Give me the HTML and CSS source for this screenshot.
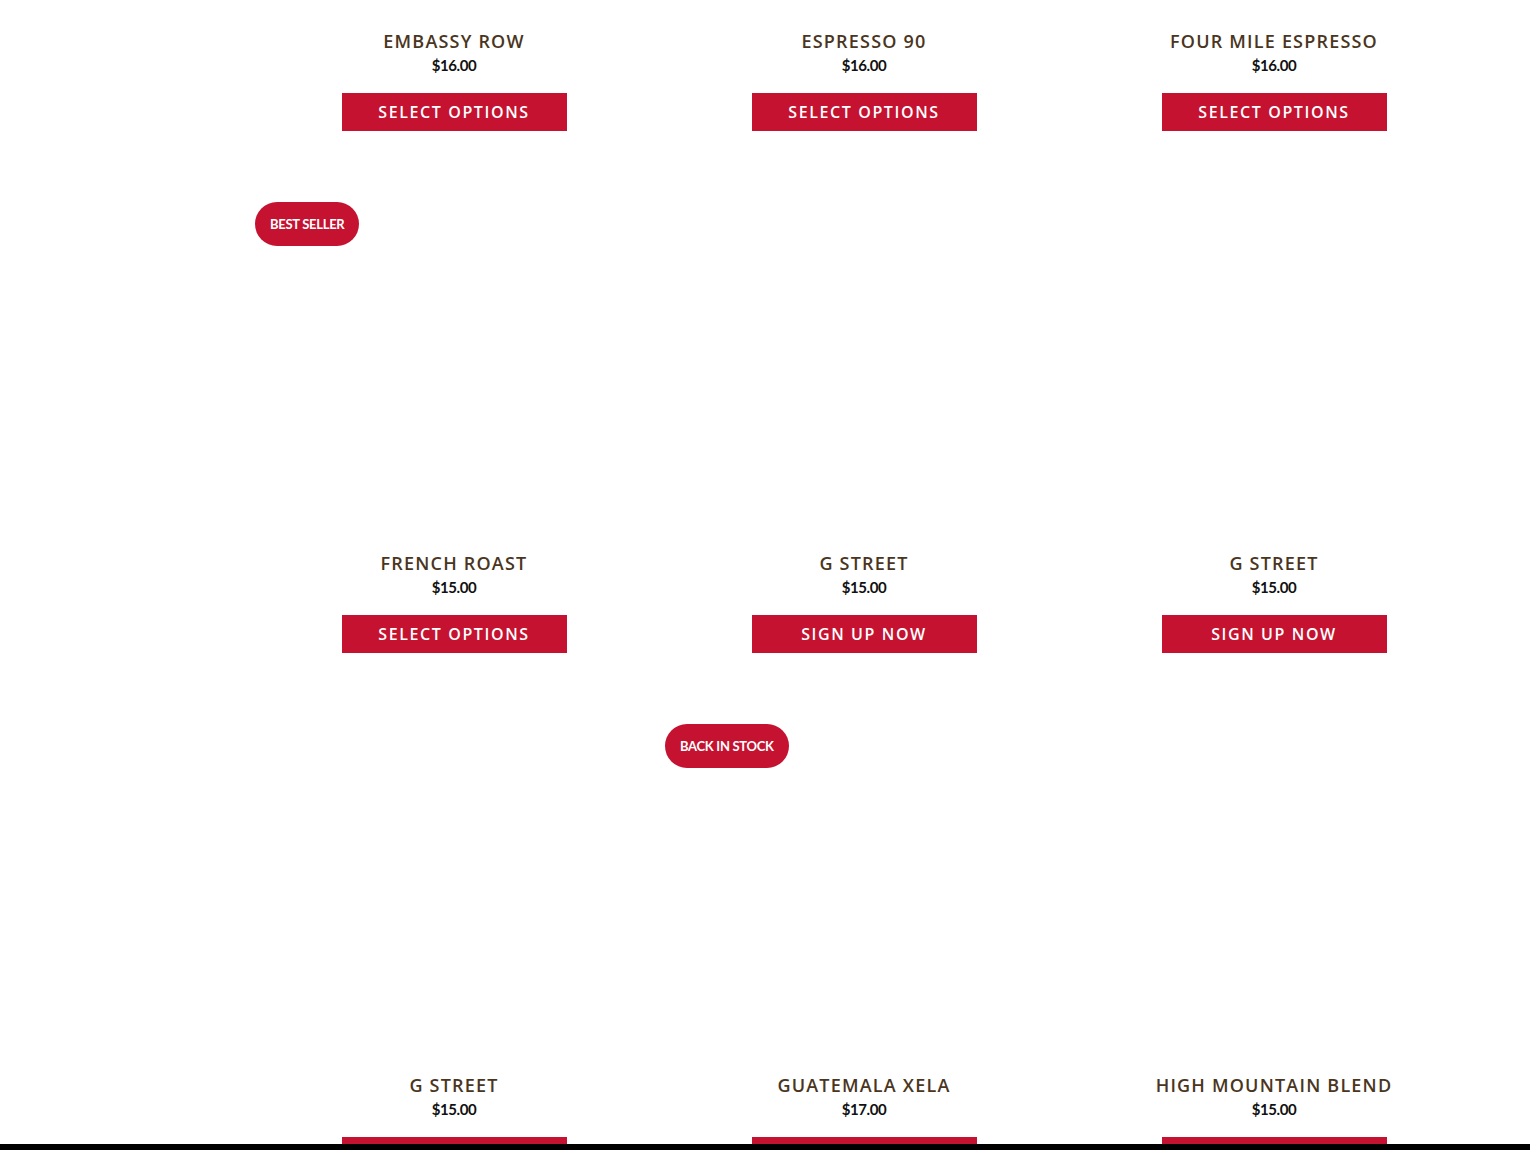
FILE: index.html
```html
<!doctype html>
<html>
<head>
    <meta charset="utf-8">
    <meta name="viewport" content="width=device-width, initial-scale=1">
    <title>Shop Coffee</title>

    <link rel="stylesheet" href="styles.css">
</head>
<body>

<div class="shop">
    <ul class="products">
        <li class="product">
            <div class="thumb"></div>
            <h2 class="productTitle">Embassy Row</h2>
            <span class="price">$16.00</span>
            <a class="button" href="#">Select options</a>
        </li>
        <li class="product">
            <div class="thumb"></div>
            <h2 class="productTitle">Espresso 90</h2>
            <span class="price">$16.00</span>
            <a class="button" href="#">Select options</a>
        </li>
        <li class="product">
            <div class="thumb"></div>
            <h2 class="productTitle">Four Mile Espresso</h2>
            <span class="price">$16.00</span>
            <a class="button" href="#">Select options</a>
        </li>

        <li class="product">
            <span class="badge">Best Seller</span>
            <div class="thumb"></div>
            <h2 class="productTitle">French Roast</h2>
            <span class="price">$15.00</span>
            <a class="button" href="#">Select options</a>
        </li>
        <li class="product">
            <div class="thumb"></div>
            <h2 class="productTitle">G Street</h2>
            <span class="price">$15.00</span>
            <a class="button" href="#">Sign up now</a>
        </li>
        <li class="product">
            <div class="thumb"></div>
            <h2 class="productTitle">G Street</h2>
            <span class="price">$15.00</span>
            <a class="button" href="#">Sign up now</a>
        </li>

        <li class="product">
            <div class="thumb"></div>
            <h2 class="productTitle">G Street</h2>
            <span class="price">$15.00</span>
            <a class="button" href="#">Select options</a>
        </li>
        <li class="product">
            <span class="badge">Back in stock</span>
            <div class="thumb"></div>
            <h2 class="productTitle">Guatemala Xela</h2>
            <span class="price">$17.00</span>
            <a class="button" href="#">Select options</a>
        </li>
        <li class="product">
            <div class="thumb"></div>
            <h2 class="productTitle">High Mountain Blend</h2>
            <span class="price">$15.00</span>
            <a class="button" href="#">Select options</a>
        </li>
    </ul>
</div>

<div class="bottomBar"></div>

</body>
</html>
```

FILE: styles.css
```css
body {
    font-family: "Open Sans", sans-serif;
    background-color: #fff;
    color: #111;
    margin: 0;
    padding: 0;
    overflow: hidden;
}

.shop {
    padding-left: 255px;
}

/* page is scrolled, first row sits partly above the top */
.products {
    list-style: none;
    margin: -330px 0 0 0;
    padding: 0;
    width: 1218px;
    display: grid;
    grid-template-columns: repeat(3, 398px);
    column-gap: 12px;
    row-gap: 61px;
}

.product {
    position: relative;
    display: flex;
    flex-direction: column;
    align-items: center;
    text-align: center;
}

.thumb {
    width: 100%;
    height: 348px;
}

.badge {
    position: absolute;
    top: 10px;
    left: 0;
    height: 44px;
    line-height: 44px;
    padding: 0 15px;
    border-radius: 22px;
    background-color: #c41230;
    color: #fff;
    font-family: Lato, sans-serif;
    font-weight: 700;
    font-size: 13px;
    letter-spacing: -0.3px;
    text-transform: uppercase;
}

.productTitle {
    margin: 11px 0 0 0;
    font-size: 18px;
    line-height: 24px;
    font-weight: 600;
    letter-spacing: 1.2px;
    color: #4a3521;
    text-transform: uppercase;
}

.price {
    margin-top: 2px;
    font-family: Lato, sans-serif;
    font-weight: 700;
    font-size: 15px;
    line-height: 20px;
    letter-spacing: -0.4px;
    color: #111;
}

.button {
    margin-top: 18px;
    width: 225px;
    height: 38px;
    line-height: 38px;
    background-color: #c41230;
    color: #fff;
    text-decoration: none;
    text-transform: uppercase;
    font-size: 16px;
    font-weight: 600;
    letter-spacing: 1.6px;
}

.bottomBar {
    position: fixed;
    left: 0;
    right: 0;
    bottom: 0;
    height: 6px;
    background-color: #000;
}
```
